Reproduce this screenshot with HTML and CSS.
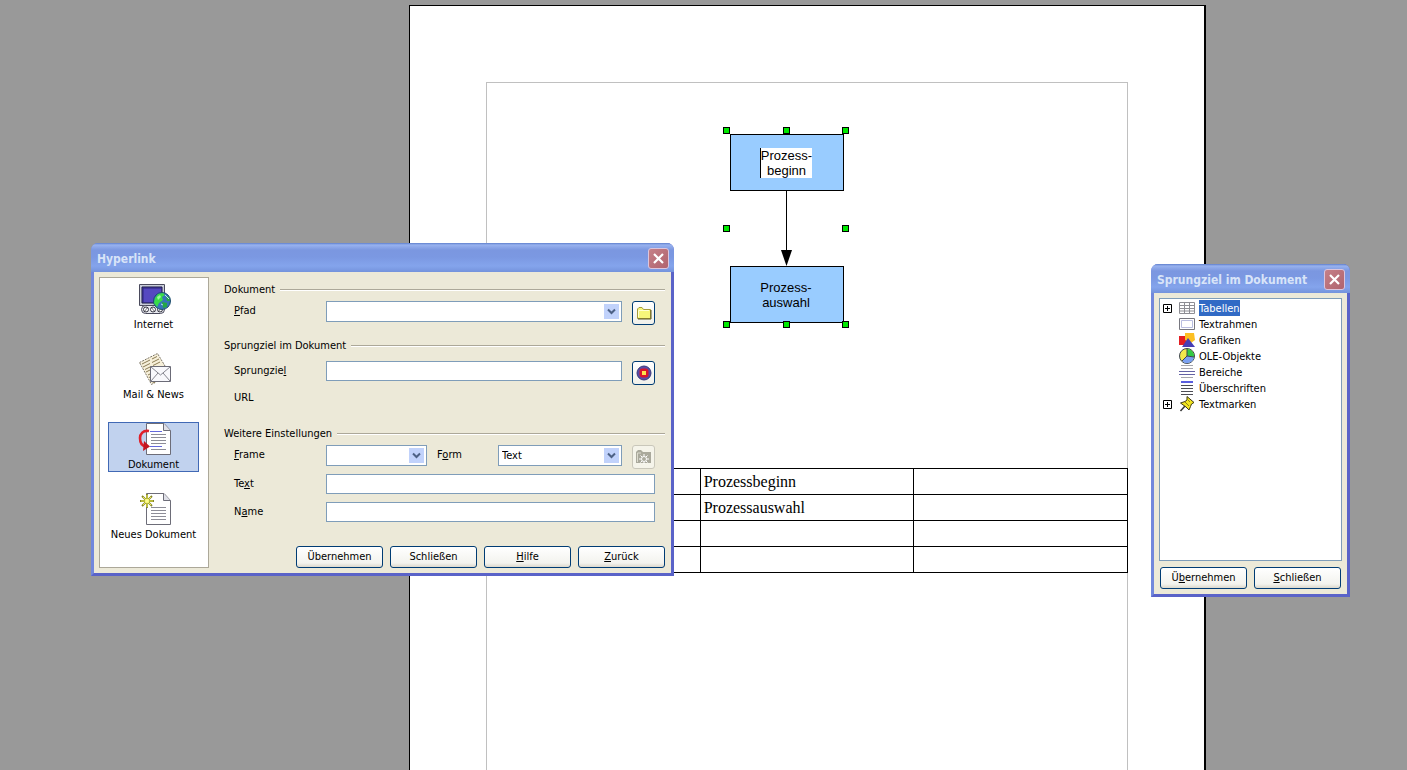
FILE: index.html
```html
<!DOCTYPE html>
<html lang="de">
<head>
    <meta charset="UTF-8">
    <meta name="viewport" content="width=device-width, initial-scale=1.0">
    <title>Hyperlink</title>
    <link rel="stylesheet" href="styles.css">
</head>
<body>
    <main class="workspace">
        <div class="sheet">
            <div class="text-area">
                <div class="diagram">
                    <div class="node"><span class="editing">Prozess-<br>beginn</span></div>
                    <svg class="arrow" width="12" height="75" viewBox="0 0 12 75">
                        <path d="M5.500 0V62" stroke="#000" fill="none"/>
                        <path d="M0 59H11L5.500 75Z"/>
                    </svg>
                    <div class="node"><span>Prozess-<br>auswahl</span></div>
                    <i class="handle top left"></i>
                    <i class="handle top center"></i>
                    <i class="handle top right"></i>
                    <i class="handle middle left"></i>
                    <i class="handle middle right"></i>
                    <i class="handle bottom left"></i>
                    <i class="handle bottom center"></i>
                    <i class="handle bottom right"></i>
                </div>

                <table class="doc-table">
                    <tr><td></td><td>Prozessbeginn</td><td></td></tr>
                    <tr><td></td><td>Prozessauswahl</td><td></td></tr>
                    <tr><td></td><td></td><td></td></tr>
                    <tr><td></td><td></td><td></td></tr>
                </table>
            </div>
        </div>
    </main>

    <!-- Hyperlink dialog -->
    <section class="window hyperlink">
        <header class="titlebar">
            <h1>Hyperlink</h1>
            <button class="close" aria-label="Fenster schließen">
                <svg width="13" height="13" viewBox="0 0 13 13"><path d="M2 2L11 11M11 2L2 11" stroke="#fff" stroke-width="2.2"/></svg>
            </button>
        </header>
        <div class="window-body">
            <nav class="categories">
                <button class="category">
                    <svg width="34" height="32" viewBox="0 0 34 32">
                        <path d="M1.500 1.500H26.500V22.500H1.500Z" fill="#c9cdda" stroke="#4a4a5c"/>
                        <path d="M4 4H24V20H4Z" fill="#5548c0" stroke="#17173f"/>
                        <path d="M5 19V5H23" stroke="#2c2478" fill="none"/>
                        <rect x="3.500" y="22.500" width="23" height="8" rx="4" fill="#e9eaf0" stroke="#4a4a5c"/>
                        <circle cx="8" cy="26.500" r="2.500" fill="#fff" stroke="#33333f"/>
                        <circle cx="15" cy="26.500" r="2.500" fill="#fff" stroke="#33333f"/>
                        <circle cx="22" cy="26.500" r="2.500" fill="#fff" stroke="#33333f"/>
                        <path d="M6 29L10 24M13 24L17 29M20 29L24 24" stroke="#33333f" stroke-width=".7"/>
                        <circle cx="24" cy="18" r="8.500" fill="#3675b8" stroke="#1d4d6c"/>
                        <path d="M17 15L20 11L25 10L27 12L24 14L25 17L21 20L19 24L16 20Z" fill="#39dc48"/>
                        <path d="M28 13L31 14L32 18L29 18ZM24 19L29 20L29 24L25 25Z" fill="#24a846"/>
                        <path d="M19 14L22 12L23 14L20 17Z" fill="#9cf79b"/>
                        <path d="M27 12L31 16M23 21L25 22" stroke="#b9e4f4"/>
                    </svg>
                    Internet
                </button>
                <button class="category">
                    <svg width="34" height="32" viewBox="0 0 34 32">
                        <path d="M1.500 9.500L19.500 .5L31.500 20.500L13.500 31.500L10 25Z" fill="#f6efd9" stroke="#7d7668" stroke-dasharray="2 1"/>
                        <path d="M4 11L12 7M14 6L19 3.500M5 14L12 10.500M14 9.500L21 6M7 16.500L13 13.500M15 12.500L22 9M8 19L13 16.500M10 22L13 20.500M11 24.500L14 23M13 28L17 30" stroke="#8b7b54" fill="none"/>
                        <path d="M12.500 13.500H32.500V28.500H12.500Z" fill="#f8f8fc" stroke="#6b6b77"/>
                        <path d="M13 14L22.500 22L32 14M13 28L20 20M32 28L25 20" fill="none" stroke="#85858f"/>
                    </svg>
                    Mail &amp; News
                </button>
                <button class="category selected">
                    <svg width="34" height="32" viewBox="0 0 34 32">
                        <path d="M8.500 .5H26L32.500 7.500V31.500H8.500Z" fill="#fff" stroke="#6d6d78"/>
                        <path d="M25.500 .5V7.500H32.500" fill="#dfe0e8" stroke="#6d6d78"/>
                        <path d="M13 11.500H28M13 14.500H28M13 17.500H28M13 20.500H28M13 26.500H28" stroke="#8d8d97"/>
                        <path d="M12 8.500H24M12 23.500H24" stroke="#6468dc"/>
                        <path d="M11 8C5 7 2 11 2 15C2 20 4 23 8 23.500" fill="none" stroke="#e0202a" stroke-width="2.600"/>
                        <path d="M6 18L12 23.500L5 28Z" fill="#c31620"/>
                    </svg>
                    Dokument
                </button>
                <button class="category">
                    <svg width="34" height="32" viewBox="0 0 34 32">
                        <path d="M8.500 .5H26L32.500 7.500V31.500H8.500Z" fill="#fff" stroke="#6d6d78"/>
                        <path d="M25.500 .5V7.500H32.500" fill="#dfe0e8" stroke="#6d6d78"/>
                        <path d="M13 14.500H28M13 17.500H28M13 20.500H28M13 23.500H28M13 26.500H28" stroke="#8d8d97"/>
                        <path d="M9 1V15M2 8H16M4 3L14 13M14 3L4 13" stroke="#85852a" stroke-width="1.800"/>
                        <path d="M9 2V14M3 8H15M5 4L13 12M13 4L5 12" stroke="#eeee4b"/>
                        <circle cx="9" cy="8" r="2" fill="#ffff8c"/>
                    </svg>
                    Neues Dokument
                </button>
            </nav>

            <form class="settings" onsubmit="return false">
                <h2>Dokument</h2>
                <div class="row">
                    <label for="path"><u>P</u>fad</label>
                    <span class="combo">
                        <select id="path"><option></option></select>
                        <svg class="drop" width="15" height="15" viewBox="0 0 15 15"><path d="M4 5.500L7.500 9L11 5.500"/></svg>
                    </span>
                    <button type="button" class="tool" aria-label="Datei öffnen">
                        <svg width="16" height="16" viewBox="0 0 16 16">
                            <path d="M1.500 13.500V4L3 2.500H6L7.500 4.500H14.500V13.500Z" fill="#f6f67a" stroke="#a69c3c"/>
                            <path d="M2.500 12V5.500H13" fill="none" stroke="#ffffd2"/>
                            <path d="M15 5V14H2" fill="none" stroke="#5f5920"/>
                        </svg>
                    </button>
                </div>

                <h2 class="target-head">Sprungziel im Dokument</h2>
                <div class="row">
                    <label for="target">Sprungzie<u>l</u></label>
                    <input type="text" id="target">
                    <button type="button" class="tool" aria-label="Ziel im Dokument">
                        <svg width="16" height="16" viewBox="0 0 16 16">
                            <circle cx="8" cy="8" r="7" fill="#574ca8" stroke="#3c3a78"/>
                            <rect x="3.500" y="3.500" width="9" height="9" rx="3" fill="#d9152c"/>
                            <rect x="6" y="6" width="4" height="4" fill="#ffe34d"/>
                        </svg>
                    </button>
                </div>
                <div class="url">URL</div>

                <h2 class="more-head">Weitere Einstellungen</h2>
                <div class="row frame-row">
                    <label for="frame"><u>F</u>rame</label>
                    <span class="combo frame">
                        <select id="frame"><option></option></select>
                        <svg class="drop" width="15" height="15" viewBox="0 0 15 15"><path d="M4 5.500L7.500 9L11 5.500"/></svg>
                    </span>
                    <label for="form" class="form-label">F<u>o</u>rm</label>
                    <span class="combo">
                        <select id="form"><option>Text</option></select>
                        <svg class="drop" width="15" height="15" viewBox="0 0 15 15"><path d="M4 5.500L7.500 9L11 5.500"/></svg>
                    </span>
                    <button type="button" class="tool" disabled aria-label="Ereignisse">
                        <svg width="18" height="16" viewBox="0 0 18 16">
                            <path d="M1 14V3L3 1H6L8 3H16V14Z" fill="#aaa99c"/>
                            <path d="M2.500 13V4H6" fill="none" stroke="#dddccf"/>
                            <circle cx="9" cy="10" r="2.500" fill="none" stroke="#fff"/>
                            <path d="M9 5V7M9 13V15M4 10H6M12 10H14M5.500 6.500L7 8M11 12L12.500 13.500M12.500 6.500L11 8M7 12L5.500 13.500" stroke="#fff"/>
                        </svg>
                    </button>
                </div>
                <div class="row">
                    <label for="text">Te<u>x</u>t</label>
                    <input type="text" id="text">
                </div>
                <div class="row">
                    <label for="name">N<u>a</u>me</label>
                    <input type="text" id="name">
                </div>

                <div class="buttons">
                    <button type="button" class="push">Übernehmen</button>
                    <button type="button" class="push">Schließen</button>
                    <button type="button" class="push"><u>H</u>ilfe</button>
                    <button type="button" class="push"><u>Z</u>urück</button>
                </div>
            </form>
        </div>
    </section>

    <!-- Target in document -->
    <section class="window targets">
        <header class="titlebar">
            <h1>Sprungziel im Dokument</h1>
            <button class="close" aria-label="Fenster schließen">
                <svg width="13" height="13" viewBox="0 0 13 13"><path d="M2 2L11 11M11 2L2 11" stroke="#fff" stroke-width="2.2"/></svg>
            </button>
        </header>
        <div class="window-body">
            <ul class="tree">
                <li>
                    <svg class="plus" width="9" height="9" viewBox="0 0 9 9"><path d="M.5 .5H8.500V8.500H.5ZM2 4.500H7M4.500 2V7" fill="#fff" stroke="#000"/></svg>
                    <svg width="16" height="16" viewBox="0 0 16 16">
                        <path d="M.5 2.500H15.500V13.500H.5ZM0 5.500H16M0 8.500H16M0 11H16M5.500 2V14M10.500 2V14" fill="#fff" stroke="#8e8e94"/>
                    </svg>
                    <span class="active">Tabellen</span>
                </li>
                <li>
                    <svg width="16" height="16" viewBox="0 0 16 16">
                        <path d="M.5 2.500H15.500V13.500H.5Z" fill="#fff" stroke="#77777f"/>
                        <path d="M2.500 4.500H13.500V11.500H2.500Z" fill="#fff" stroke="#b9bde0"/>
                    </svg>
                    <span>Textrahmen</span>
                </li>
                <li>
                    <svg width="16" height="16" viewBox="0 0 16 16">
                        <rect x="0" y="4" width="8" height="9" fill="#e31d22"/>
                        <path d="M6 1H15L16 8L12 11L6 8Z" fill="#fcbf22"/>
                        <path d="M9 6L16 15H3Z" fill="#473eb5"/>
                    </svg>
                    <span>Grafiken</span>
                </li>
                <li>
                    <svg width="16" height="16" viewBox="0 0 16 16">
                        <circle cx="8" cy="8" r="7.500" fill="#f2e84c" stroke="#3c4450"/>
                        <path d="M8 8V1A7 7 0 0 1 15 9Z" fill="#33c944"/>
                        <path d="M8 8L15 9A7 7 0 0 1 3 13Z" fill="#7aa0f2"/>
                        <path d="M8 1V8L15 9M8 8L3 13" fill="none" stroke="#3c4450"/>
                    </svg>
                    <span>OLE-Objekte</span>
                </li>
                <li>
                    <svg width="16" height="16" viewBox="0 0 16 16">
                        <path d="M2 1.500H14M2 4.500H14M2 13.500H14" stroke="#a5a5ac"/>
                        <path d="M0 7.500H16M0 10.500H16" stroke="#6462a4"/>
                    </svg>
                    <span>Bereiche</span>
                </li>
                <li>
                    <svg width="16" height="16" viewBox="0 0 16 16">
                        <path d="M2 2H14" stroke="#5a5ee0" stroke-width="2"/>
                        <path d="M2 5.500H14M2 8.500H14M2 11.500H14M2 14.500H14" stroke="#4d4d55"/>
                    </svg>
                    <span>Überschriften</span>
                </li>
                <li>
                    <svg class="plus" width="9" height="9" viewBox="0 0 9 9"><path d="M.5 .5H8.500V8.500H.5ZM2 4.500H7M4.500 2V7" fill="#fff" stroke="#000"/></svg>
                    <svg width="16" height="16" viewBox="0 0 16 16">
                        <path d="M6 10L1.500 15" stroke="#333" stroke-width="1.500"/>
                        <path d="M8 .5L15 6.500L12.500 8L11.500 10.500L10 14L7 11L1.500 7L6 5.500L8 4Z" fill="#f3e51f" stroke="#3f3a12"/>
                        <path d="M6 6L10 10M9 4L11 6" stroke="#8c8117"/>
                    </svg>
                    <span>Textmarken</span>
                </li>
            </ul>
            <div class="buttons">
                <button class="push">Ü<u>b</u>ernehmen</button>
                <button class="push"><u>S</u>chließen</button>
            </div>
        </div>
    </section>
</body>
</html>
```
FILE: styles.css
```css
* {
    box-sizing: border-box;
}

body {
    margin: 0;
    background: #999;
    color: #000;
    font-family: "DejaVu Sans Condensed", "Noto Sans", sans-serif;
    font-size: 11px;
    line-height: 14px;
    overflow: hidden;
}

button, input, select {
    font: inherit;
    color: inherit;
    margin: 0;
    padding: 0;
}

svg {
    display: block;
    flex: none;
}

/* document */

.workspace {
    display: grid;
    grid-template-columns: 409fr 797fr 201fr;
    min-height: 100vh;
    padding-top: 5px;
}

.sheet {
    grid-column: 2;
    display: flex;
    background: #fff;
    border: 1px solid #000;
    border-width: 1px 2px 0 1px;
    padding: 76px 76px 0;
}

.text-area {
    flex: 1;
    border: 1px solid #c0c0c0;
    border-bottom: none;
}

.diagram {
    position: relative;
    display: flex;
    flex-direction: column;
    align-items: center;
    width: 114px;
    margin: 51px 0 0 243px;
}

.node {
    display: flex;
    align-items: center;
    justify-content: center;
    width: 100%;
    height: 57px;
    padding-right: 2px;
    background: #9cf;
    border: 1px solid #000;
    font-family: "Liberation Sans", Arial, sans-serif;
    font-size: 13px;
    line-height: 15px;
    text-align: center;
}

.editing {
    background: #fff;
    border-left: 1px solid #000;
}

.handle {
    position: absolute;
    width: 7px;
    height: 7px;
    background: #00e800;
    border: 1px solid #000;
}

.handle.top { top: -7px; }
.handle.middle { top: 91px; }
.handle.bottom { bottom: -5px; }
.handle.left { left: -7px; }
.handle.center { left: 53px; }
.handle.right { right: -5px; }

.doc-table {
    width: calc(100% + 2px);
    margin: 145px -1px 0;
    border-collapse: collapse;
    table-layout: fixed;
    font-family: "Liberation Serif", "Times New Roman", serif;
    font-size: 16px;
    line-height: 18px;
}

.doc-table td {
    height: 26px;
    padding: 0 3px;
    border: 1px solid #000;
}

/* windows */

.window {
    position: absolute;
    display: flex;
    flex-direction: column;
    height: 333px;
    border: 3px solid #5a63c8;
    border-left-color: #7288dc;
    border-top: none;
    border-radius: 7px 7px 0 0;
    background: #7b96e0;
}

.hyperlink {
    left: 91px;
    top: 243px;
    width: 583px;
}

.targets {
    left: 1151px;
    top: 264px;
    width: 199px;
}

.titlebar {
    display: flex;
    align-items: center;
    justify-content: space-between;
    height: 29px;
    margin: 0 -3px;
    padding: 2px 5px 0 6px;
    border-radius: 7px 7px 0 0;
    background: linear-gradient(#5f7fcc 0, #98b2ef 2px, #7b97e0 7px, #7b98e2 14px, #84a4ec 23px, #7493dc 29px);
}

.titlebar h1 {
    margin: 0;
    color: #d8e4f8;
    font-size: 12px;
    line-height: 18px;
    white-space: nowrap;
}

.close {
    display: flex;
    align-items: center;
    justify-content: center;
    width: 21px;
    height: 21px;
    border: 1px solid #dcc5dc;
    border-radius: 3px;
    background: linear-gradient(135deg, #c58088, #b0636e);
}

.window-body {
    flex: 1;
    display: flex;
    padding: 5px;
    background: #ece9d8;
}

/* category list */

.categories {
    display: flex;
    flex-direction: column;
    align-items: center;
    gap: 20px;
    width: 110px;
    padding: 4px 1px 0 0;
    background: #fff;
    border: 1px solid #aca899;
}

.category {
    display: flex;
    flex-direction: column;
    align-items: center;
    gap: 3px;
    width: 91px;
    height: 50px;
    border: 1px solid transparent;
    background: none;
    white-space: nowrap;
}

.category svg {
    margin-left: 3px;
}

.category.selected {
    background: #c1d2ee;
    border-color: #4169b5;
}

/* form */

.settings {
    flex: 1;
    display: flex;
    flex-direction: column;
    padding: 6px 1px 0 15px;
}

.settings h2 {
    display: flex;
    align-items: center;
    gap: 5px;
    margin: 0 0 4px;
    font-size: 11px;
    font-weight: normal;
}

.settings h2::after {
    content: "";
    flex: 1;
    border-top: 1px solid #aca899;
    border-bottom: 1px solid #fff;
}

.settings .target-head {
    margin: 14px 0 8px;
}

.settings .more-head {
    margin: 22px 0 4px;
}

.row {
    display: flex;
    align-items: flex-start;
    padding: 0 10px;
}

.row + .row {
    margin-top: 8px;
}

.frame-row + .row {
    margin-top: 5px;
}

.row label {
    width: 92px;
    padding-top: 3px;
}

.row .form-label {
    width: 71px;
    padding-left: 10px;
}

.row input {
    flex: 1;
    min-width: 0;
    height: 20px;
    border: 1px solid #7f9db9;
    background: #fff;
}

.combo {
    position: relative;
    display: flex;
    flex: 1;
}

.combo.frame {
    flex: 0 0 101px;
}

.combo select {
    flex: 1;
    appearance: none;
    height: 21px;
    padding: 0 20px 0 3px;
    border: 1px solid #7f9db9;
    border-radius: 0;
    background: #fff;
}

.drop {
    position: absolute;
    top: 3px;
    right: 3px;
    background: #c1d2fb;
    fill: none;
    stroke: #4d6185;
    stroke-width: 2;
    pointer-events: none;
}

.tool {
    display: flex;
    align-items: center;
    justify-content: center;
    width: 23px;
    height: 24px;
    margin-left: 10px;
    border: 1px solid #003c74;
    border-radius: 3px;
    background: linear-gradient(#fff, #f0f0ea);
}

.tool:disabled {
    border-color: #c9c7ba;
    background: #f5f4ea;
}

.url {
    margin-top: 6px;
    padding-left: 10px;
}

.buttons {
    display: flex;
    justify-content: flex-end;
    gap: 7px;
    margin-top: auto;
}

.push {
    width: 87px;
    height: 22px;
    border: 1px solid #003c74;
    border-radius: 3px;
    background: linear-gradient(#fff, #f3f3ee 80%, #dcd8cc);
}

/* target tree */

.targets .window-body {
    flex-direction: column;
}

.targets .buttons {
    justify-content: center;
}

.tree {
    flex: 1;
    margin: 0 0 6px;
    padding: 1px 3px;
    list-style: none;
    background: #fff;
    border: 1px solid #7f9db9;
}

.tree li {
    display: flex;
    align-items: center;
    height: 16px;
    padding-left: 16px;
}

.tree li:has(.plus) {
    padding-left: 0;
}

.plus {
    margin-right: 7px;
}

.tree span {
    margin-left: 4px;
    padding-top: 2px;
    line-height: 14px;
}

.tree .active {
    background: #316ac5;
    color: #fff;
}
```
